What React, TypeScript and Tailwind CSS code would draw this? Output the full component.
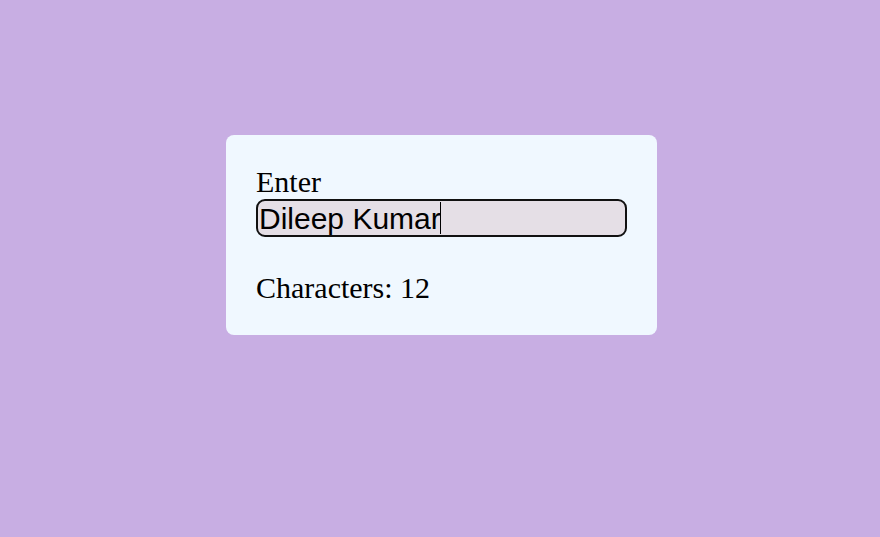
import React, { useState } from "react";

export default function App() {
  const [value, setValue] = useState("Dileep Kumar");
  return (
    <div className="min-h-[537px] w-full bg-[#c8aee3] flex justify-center items-start pt-[135px] pl-[3px]">
      <div className="w-[431px] bg-[#f0f8ff] rounded-[8px] p-[30px] text-black [font-family:'Liberation_Serif',serif]">
        <label className="block text-[30px] leading-[34px]" htmlFor="name">
          Enter
        </label>
        <div className="relative w-[371px]">
          <input
            id="name"
            value={value}
            onChange={(e) => setValue(e.target.value)}
            className="block w-[371px] h-[38px] border-2 border-[#111] rounded-[9px] bg-[#e5dfe6] px-[1px] py-0 text-[30px] text-black outline-none caret-transparent [font-family:'Liberation_Sans',Arial,sans-serif]"
          />
          <span className="pointer-events-none absolute left-[184px] top-[3px] h-[32px] w-px bg-black" />
        </div>
        <p className="mt-[34px] text-[30px] leading-[34px]">Characters: {value.length}</p>
      </div>
    </div>
  );
}
